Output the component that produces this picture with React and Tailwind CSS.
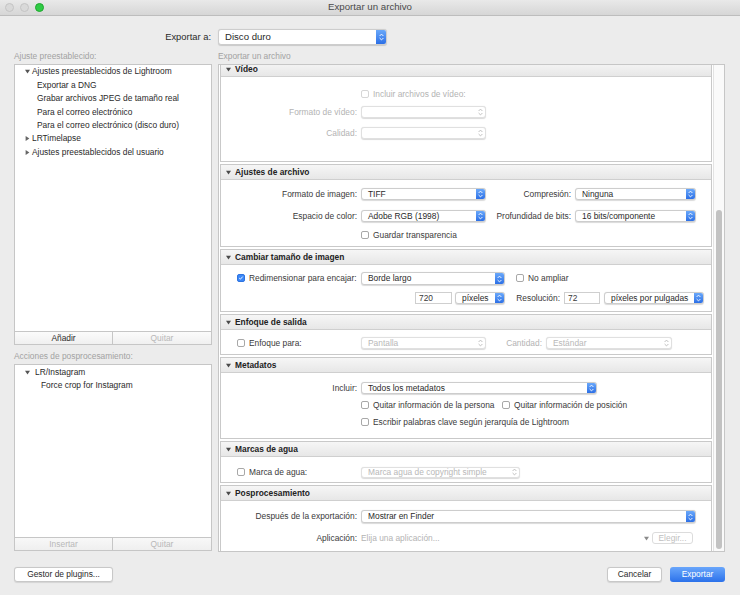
import React from "react";

// 小图标：上下箭头
const Stepper = ({ blue, disabled, wide }) => (
  <div
    className={`flex h-full shrink-0 items-center justify-center ${wide ? "w-[10px]" : "w-[9px]"} ${
      blue && !disabled ? "bg-gradient-to-b from-[#6aa8fa] to-[#2c6fe6]" : ""
    }`}
  >
    <svg width="9" height="12" viewBox="0 0 9 12">
      <path
        d="M2.6 5 L4.5 3.1 L6.4 5 M2.6 7 L4.5 8.9 L6.4 7"
        fill="none"
        stroke={blue && !disabled ? "#ffffff" : disabled ? "#b9b9b9" : "#7a7a7a"}
        strokeWidth="0.9"
      />
    </svg>
  </div>
);

const Select = ({ className, value, disabled, blue = true, big }) => (
  <div
    className={`flex shrink-0 items-stretch overflow-hidden rounded-[3px] border bg-white shadow-[0_0.5px_1px_rgba(0,0,0,0.15)] ${
      disabled ? "border-[#e0e0e0] text-[#b8b8b8]" : "border-[#cdcdcd] text-[#2a2a2a]"
    } ${className}`}
  >
    <div className={`flex flex-1 items-center ${big ? "pl-[6px] text-[9.6px]" : "pl-[6px]"} whitespace-nowrap`}>{value}</div>
    <Stepper blue={blue} disabled={disabled} wide={big} />
  </div>
);

const Checkbox = ({ checked, disabled }) =>
  checked ? (
    <div className="flex h-[8px] w-[8px] shrink-0 items-center justify-center rounded-[2px] border border-[#2f74e0] bg-[#3b87f7]">
      <svg width="8" height="8" viewBox="0 0 8 8">
        <path d="M1.6 4.1 L3.2 5.6 L6.3 2.1" fill="none" stroke="#fff" strokeWidth="1.2" />
      </svg>
    </div>
  ) : (
    <div
      className={`h-[8px] w-[8px] shrink-0 rounded-[2px] border bg-white ${
        disabled ? "border-[#d6d6d6]" : "border-[#a8a8a8]"
      }`}
    />
  );

const Down = ({ c = "#555" }) => (
  <svg width="5" height="5" viewBox="0 0 5 5" className="shrink-0">
    <path d="M0 0.8 L5 0.8 L2.5 4.6 Z" fill={c} />
  </svg>
);

const Right = ({ c = "#666" }) => (
  <svg width="5" height="5" viewBox="0 0 5 5" className="shrink-0">
    <path d="M0.6 0 L4.4 2.5 L0.6 5 Z" fill={c} />
  </svg>
);

// 分组：灰色标题 + 白色内容
const Section = ({ title, bodyClass, children }) => (
  <div className="ml-[1px] mr-[1px] mb-[2px] border border-[#c9c9c9] bg-white">
    <div className="flex h-[15px] items-center gap-[4px] border-b border-[#cfcfcf] bg-gradient-to-b from-[#f6f6f6] to-[#e7e7e7] pl-[5px] font-bold text-[#222]">
      <Down c="#4a4a4a" />
      <span>{title}</span>
    </div>
    <div className={bodyClass}>{children}</div>
  </div>
);

const Label = ({ className = "w-[140px]", children, disabled }) => (
  <div className={`shrink-0 pr-[4px] text-right whitespace-nowrap ${disabled ? "text-[#b3b3b3]" : "text-[#3a3a3a]"} ${className}`}>
    {children}
  </div>
);

const App = () => {
  return (
    <div className="h-[595px] w-[740px] overflow-hidden bg-[#ececec] font-['Liberation_Sans',Arial,sans-serif] text-[8.4px] text-[#2a2a2a]">
      {/* 标题栏 */}
      <div className="relative flex h-[16px] items-center border-b border-[#bdbdbd] bg-gradient-to-b from-[#e9e9e9] to-[#d6d6d6]">
        <div className="flex items-center gap-[6px] pl-[5px]">
          <div className="h-[9px] w-[9px] rounded-full border border-[#c4c4c4] bg-[#d9d9d9]" />
          <div className="h-[9px] w-[9px] rounded-full border border-[#c4c4c4] bg-[#d9d9d9]" />
          <div className="h-[9px] w-[9px] rounded-full border border-[#1fa82e] bg-[#2fcb45]" />
        </div>
        <div className="absolute inset-x-0 text-center text-[9.7px] text-[#4a4a4a]">Exportar un archivo</div>
      </div>

      <div className="pl-[14px] pr-[15px]">
        {/* Exportar a */}
        <div className="mt-[13px] flex h-[16px] items-center gap-[6px]">
          <div className="w-[198px] pr-[1px] text-right text-[9.4px] text-[#2a2a2a]">Exportar a:</div>
          <Select className="h-[16px] w-[169px]" value="Disco duro" big />
        </div>

        <div className="mt-[5px] flex h-[12px] items-center gap-[6px] text-[#a2a2a2]">
          <div className="w-[198px]">Ajuste preestablecido:</div>
          <div>Exportar un archivo</div>
        </div>

        <div className="mt-[2px] flex gap-[6px]">
          {/* 左侧 */}
          <div className="flex w-[198px] flex-col">
            <div className="h-[268px] border border-[#c6c6c6] bg-white pt-[0px] text-[#2a2a2a]">
              <div className="flex h-[13.4px] items-center gap-[2px] pl-[10px]">
                <Down />
                <span>Ajustes preestablecidos de Lightroom</span>
              </div>
              <div className="flex h-[13.4px] items-center pl-[22px]">Exportar a DNG</div>
              <div className="flex h-[13.4px] items-center pl-[22px]">Grabar archivos JPEG de tamaño real</div>
              <div className="flex h-[13.4px] items-center pl-[22px]">Para el correo electrónico</div>
              <div className="flex h-[13.4px] items-center pl-[22px]">Para el correo electrónico (disco duro)</div>
              <div className="flex h-[13.4px] items-center gap-[2px] pl-[10px]">
                <Right />
                <span>LRTimelapse</span>
              </div>
              <div className="flex h-[13.4px] items-center gap-[2px] pl-[10px]">
                <Right />
                <span>Ajustes preestablecidos del usuario</span>
              </div>
            </div>
            <div className="grid h-[13px] grid-cols-2 border border-t-0 border-[#c6c6c6] bg-gradient-to-b from-[#fbfbfb] to-[#f0f0f0]">
              <div className="flex items-center justify-center border-r border-[#c6c6c6] text-[#2a2a2a]">Añadir</div>
              <div className="flex items-center justify-center text-[#b8b8b8]">Quitar</div>
            </div>

            <div className="mt-[5px] flex h-[12px] items-center text-[#a2a2a2]">Acciones de posprocesamiento:</div>

            <div className="mt-[2px] h-[174px] border border-[#c6c6c6] bg-white">
              <div className="flex h-[13.4px] items-center gap-[5px] pl-[10px] pt-[1px]">
                <Down />
                <span>LR/Instagram</span>
              </div>
              <div className="flex h-[13.4px] items-center pl-[26px]">Force crop for Instagram</div>
            </div>
            <div className="grid h-[13px] grid-cols-2 border border-t-0 border-[#c6c6c6] bg-gradient-to-b from-[#f8f8f8] to-[#efefef] text-[#b8b8b8]">
              <div className="flex items-center justify-center border-r border-[#c6c6c6]">Insertar</div>
              <div className="flex items-center justify-center">Quitar</div>
            </div>
          </div>

          {/* 右侧 */}
          <div className="flex h-[488px] w-[507px] overflow-hidden border border-[#c6c6c6] bg-white">
            <div className="flex-1 overflow-hidden">
              <div className="-mt-[4px]">
                <Section title="Vídeo" bodyClass="h-[84px] pt-[11px]">
                  <div className="flex h-[12px] items-center gap-[4px] pl-[140px] text-[#b3b3b3]">
                    <Checkbox disabled />
                    <span>Incluir archivos de vídeo:</span>
                  </div>
                  <div className="mt-[6px] flex h-[12px] items-center">
                    <Label disabled>Formato de vídeo:</Label>
                    <Select className="h-[12px] w-[125px]" value="" disabled blue={false} />
                  </div>
                  <div className="mt-[9px] flex h-[12px] items-center">
                    <Label disabled>Calidad:</Label>
                    <Select className="h-[12px] w-[125px]" value="" disabled blue={false} />
                  </div>
                </Section>

                <Section title="Ajustes de archivo" bodyClass="h-[66px] pt-[8px]">
                  <div className="flex h-[12px] items-center">
                    <Label>Formato de imagen:</Label>
                    <Select className="h-[12px] w-[125px]" value="TIFF" />
                    <Label className="w-[89px]">Compresión:</Label>
                    <Select className="h-[12px] w-[121px]" value="Ninguna" />
                  </div>
                  <div className="mt-[10px] flex h-[12px] items-center">
                    <Label>Espacio de color:</Label>
                    <Select className="h-[12px] w-[125px]" value="Adobe RGB (1998)" />
                    <Label className="w-[89px]">Profundidad de bits:</Label>
                    <Select className="h-[12px] w-[121px]" value="16 bits/componente" />
                  </div>
                  <div className="mt-[7px] flex h-[12px] items-center gap-[4px] pl-[140px] text-[#3a3a3a]">
                    <Checkbox />
                    <span>Guardar transparencia</span>
                  </div>
                </Section>

                <Section title="Cambiar tamaño de imagen" bodyClass="h-[46px] pt-[7px]">
                  <div className="flex h-[13px] items-center">
                    <div className="flex w-[140px] shrink-0 items-center gap-[4px] pl-[16px] text-[#3a3a3a]">
                      <Checkbox checked />
                      <span>Redimensionar para encajar:</span>
                    </div>
                    <Select className="h-[13px] w-[144px]" value="Borde largo" />
                    <div className="ml-[11px] flex items-center gap-[4px] text-[#3a3a3a]">
                      <Checkbox />
                      <span>No ampliar</span>
                    </div>
                  </div>
                  <div className="mt-[7px] flex h-[12px] items-center">
                    <div className="ml-[194px] flex h-[12px] w-[37px] shrink-0 items-center border border-[#cfcfcf] bg-white pl-[3px] text-[#3a3a3a]">720</div>
                    <Select className="ml-[3px] h-[12px] w-[50px]" value="píxeles" />
                    <Label className="w-[59px]">Resolución:</Label>
                    <div className="flex h-[12px] w-[36px] shrink-0 items-center border border-[#cfcfcf] bg-white pl-[3px] text-[#3a3a3a]">72</div>
                    <Select className="ml-[4px] h-[12px] w-[100px]" value="píxeles por pulgadas" />
                  </div>
                </Section>

                <Section title="Enfoque de salida" bodyClass="h-[24px] pt-[7px]">
                  <div className="flex h-[12px] items-center">
                    <div className="flex w-[140px] shrink-0 items-center gap-[4px] pl-[16px] text-[#3a3a3a]">
                      <Checkbox />
                      <span>Enfoque para:</span>
                    </div>
                    <Select className="h-[12px] w-[125px]" value="Pantalla" disabled blue={false} />
                    <Label className="w-[60px]" disabled>Cantidad:</Label>
                    <Select className="h-[12px] w-[126px]" value="Estándar" disabled blue={false} />
                  </div>
                </Section>

                <Section title="Metadatos" bodyClass="h-[65px] pt-[9px]">
                  <div className="flex h-[12px] items-center">
                    <Label>Incluir:</Label>
                    <Select className="h-[12px] w-[236px]" value="Todos los metadatos" />
                  </div>
                  <div className="mt-[5px] flex h-[12px] items-center pl-[140px] text-[#3a3a3a]">
                    <div className="flex w-[141px] items-center gap-[4px]">
                      <Checkbox />
                      <span>Quitar información de la persona</span>
                    </div>
                    <div className="flex items-center gap-[4px]">
                      <Checkbox />
                      <span>Quitar información de posición</span>
                    </div>
                  </div>
                  <div className="mt-[5px] flex h-[12px] items-center gap-[4px] pl-[140px] text-[#3a3a3a]">
                    <Checkbox />
                    <span>Escribir palabras clave según jerarquía de Lightroom</span>
                  </div>
                </Section>

                <Section title="Marcas de agua" bodyClass="h-[25px] pt-[9px]">
                  <div className="flex h-[12px] items-center">
                    <div className="flex w-[140px] shrink-0 items-center gap-[4px] pl-[16px] text-[#3a3a3a]">
                      <Checkbox />
                      <span>Marca de agua:</span>
                    </div>
                    <Select className="h-[11px] w-[159px]" value="Marca agua de copyright simple" disabled blue={false} />
                  </div>
                </Section>

                <Section title="Posprocesamiento" bodyClass="h-[60px] pt-[9px]">
                  <div className="flex h-[13px] items-center">
                    <Label>Después de la exportación:</Label>
                    <Select className="h-[13px] w-[335px]" value="Mostrar en Finder" />
                  </div>
                  <div className="mt-[9px] flex h-[12px] items-center">
                    <Label>Aplicación:</Label>
                    <div className="w-[283px] text-[#b3b3b3]">Elija una aplicación...</div>
                    <Down c="#8a8a8a" />
                    <div className="ml-[3px] flex h-[12px] w-[41px] items-center justify-center rounded-[3px] border border-[#dcdcdc] bg-white text-[#c0c0c0]">
                      Elegir...
                    </div>
                  </div>
                </Section>
              </div>
            </div>
            {/* 滚动条 */}
            <div className="flex w-[11px] shrink-0 flex-col border-l border-[#e3e3e3] bg-[#fafafa] px-[2px] pt-[145px] pb-[2px]">
              <div className="flex-1 rounded-full bg-[#c2c2c2]" />
            </div>
          </div>
        </div>

        {/* 底部按钮 */}
        <div className="mt-[15px] flex h-[15px] items-center">
          <div className="flex h-[15px] w-[99px] items-center justify-center rounded-[3px] border border-[#c8c8c8] bg-white text-[#2a2a2a] shadow-[0_0.5px_1px_rgba(0,0,0,0.1)]">
            Gestor de plugins...
          </div>
          <div className="flex-1" />
          <div className="flex h-[15px] w-[55px] items-center justify-center rounded-[3px] border border-[#c8c8c8] bg-white text-[#2a2a2a] shadow-[0_0.5px_1px_rgba(0,0,0,0.1)]">
            Cancelar
          </div>
          <div className="ml-[8px] flex h-[15px] w-[55px] items-center justify-center rounded-[3px] bg-gradient-to-b from-[#69a6fb] to-[#2b71ea] text-white">
            Exportar
          </div>
        </div>
      </div>
    </div>
  );
};

export default App;
